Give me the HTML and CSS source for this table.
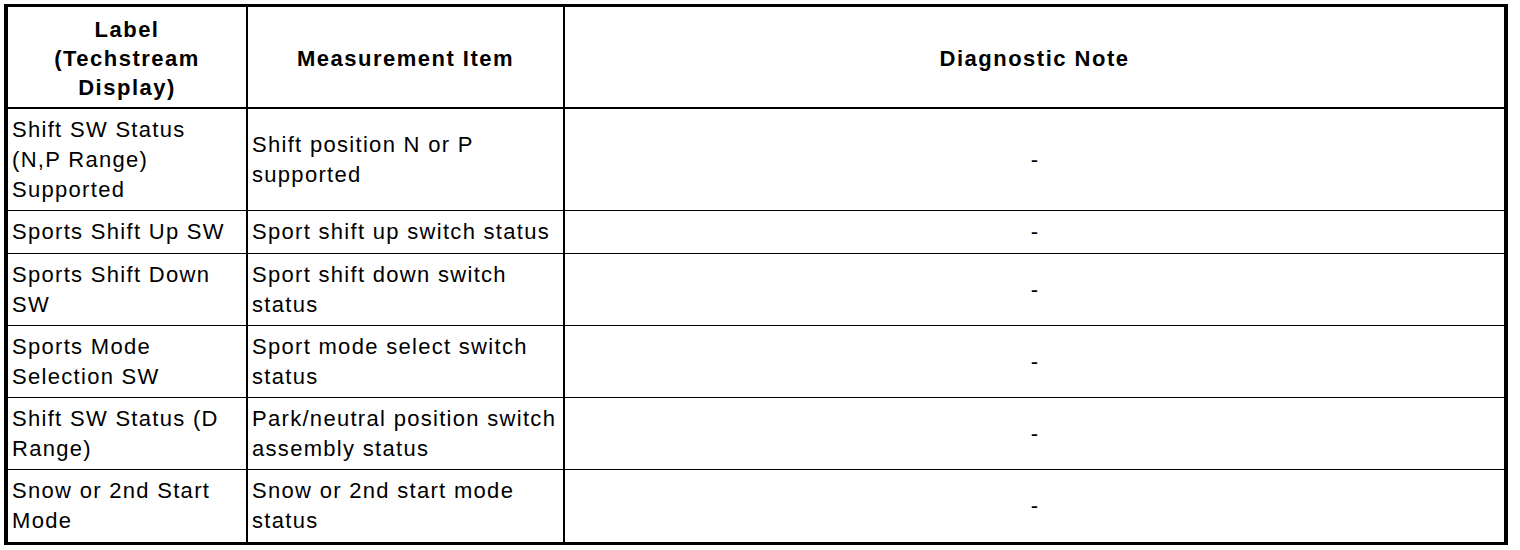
FILE: index.html
```html
<!DOCTYPE html>
<html>
<head>
<meta charset="utf-8">
<link rel="stylesheet" href="styles.css">
</head>
<body>
<table class="data">
  <thead>
    <tr>
      <th class="c1">Label<br>(Techstream<br>Display)</th>
      <th class="c2">Measurement Item</th>
      <th class="c3">Diagnostic Note</th>
    </tr>
  </thead>
  <tbody>
    <tr>
      <td>Shift SW Status<br>(N,P Range)<br>Supported</td>
      <td>Shift position N or P<br>supported</td>
      <td class="note">-</td>
    </tr>
    <tr>
      <td>Sports Shift Up SW</td>
      <td>Sport shift up switch status</td>
      <td class="note">-</td>
    </tr>
    <tr>
      <td>Sports Shift Down<br>SW</td>
      <td>Sport shift down switch<br>status</td>
      <td class="note">-</td>
    </tr>
    <tr>
      <td>Sports Mode<br>Selection SW</td>
      <td>Sport mode select switch<br>status</td>
      <td class="note">-</td>
    </tr>
    <tr>
      <td>Shift SW Status (D<br>Range)</td>
      <td>Park/neutral position switch<br>assembly status</td>
      <td class="note">-</td>
    </tr>
    <tr class="last">
      <td>Snow or 2nd Start<br>Mode</td>
      <td>Snow or 2nd start mode<br>status</td>
      <td class="note">-</td>
    </tr>
  </tbody>
</table>
</body>
</html>
```

FILE: styles.css
```css
html, body {
  margin: 0;
  background: #ffffff;
}

body {
  padding: 4px;
  font-family: "Liberation Sans", Arial, sans-serif;
  color: #000000;
}

.data {
  border-collapse: separate;
  border-spacing: 0;
  table-layout: fixed;
  width: 1504px;
  border-style: solid;
  border-color: #000000;
  border-width: 3px 4px 3px 4px;
}

.data th,
.data td {
  box-sizing: border-box;
  padding: 6px 4px 5.3px 4px;
  vertical-align: middle;
  white-space: nowrap;
  border-right: 2px solid #000000;
  border-bottom: 1px solid #000000;
  font-size: 22px;
  line-height: 30px;
  letter-spacing: 1.3px;
  text-align: left;
}

.data th:last-child,
.data td:last-child {
  border-right: 0;
}

.data th {
  font-weight: bold;
  letter-spacing: 1.5px;
  text-align: center;
  line-height: 29px;
  padding: 8px 4px 5px 4px;
  border-bottom: 2px solid #000000;
}

.data .c1 { width: 240px; }
.data .c2 { width: 317px; }
.data .c3 { width: 939px; }

.data tr.last td { border-bottom: 0; }

.data td.note {
  text-align: center;
  letter-spacing: 0;
}
```
